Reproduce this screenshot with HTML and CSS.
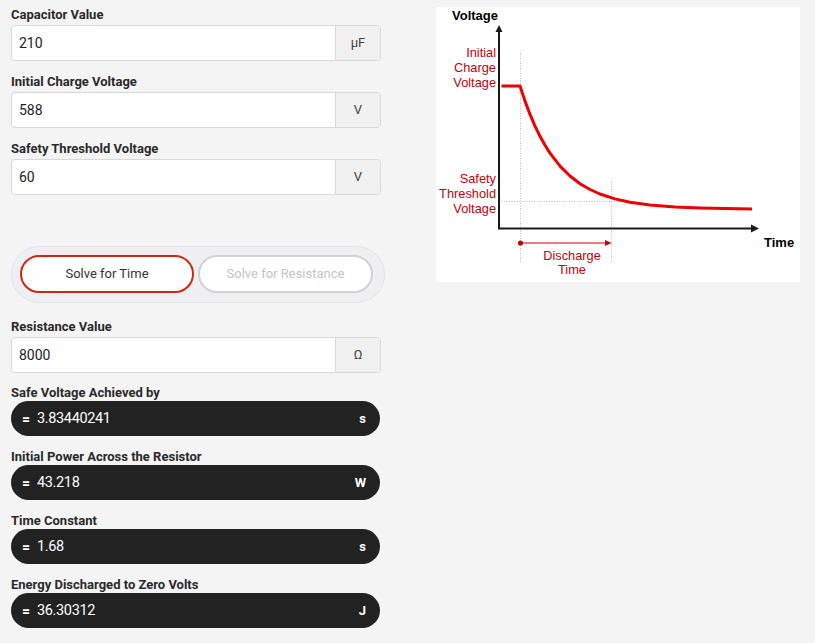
FILE: index.html
```html
<!DOCTYPE html>
<html>
<head>
<meta charset="utf-8">
<link rel="stylesheet" href="styles.css">
</head>
<body>
<div class="page">
  <div class="calc">
    <div class="field">
      <div class="label">Capacitor Value</div>
      <div class="input"><span class="val">210</span><span class="unit">μF</span></div>
    </div>
    <div class="field">
      <div class="label">Initial Charge Voltage</div>
      <div class="input"><span class="val">588</span><span class="unit">V</span></div>
    </div>
    <div class="field">
      <div class="label">Safety Threshold Voltage</div>
      <div class="input"><span class="val">60</span><span class="unit">V</span></div>
    </div>

    <div class="toggle">
      <div class="btn active">Solve for Time</div>
      <div class="btn">Solve for Resistance</div>
    </div>

    <div class="field res">
      <div class="label">Resistance Value</div>
      <div class="input"><span class="val">8000</span><span class="unit">Ω</span></div>
    </div>

    <div class="out-field">
      <div class="label">Safe Voltage Achieved by</div>
      <div class="output"><span class="eq">=</span><span class="oval">3.83440241</span><span class="ounit">s</span></div>
    </div>
    <div class="out-field">
      <div class="label">Initial Power Across the Resistor</div>
      <div class="output"><span class="eq">=</span><span class="oval">43.218</span><span class="ounit">W</span></div>
    </div>
    <div class="out-field">
      <div class="label">Time Constant</div>
      <div class="output"><span class="eq">=</span><span class="oval">1.68</span><span class="ounit">s</span></div>
    </div>
    <div class="out-field">
      <div class="label">Energy Discharged to Zero Volts</div>
      <div class="output"><span class="eq">=</span><span class="oval">36.30312</span><span class="ounit">J</span></div>
    </div>
  </div>

  <div class="chart">
    <svg width="364" height="275" viewBox="436 7 364 275" xmlns="http://www.w3.org/2000/svg">
      <rect x="436" y="7" width="364" height="275" fill="#fff"/>
      <!-- dotted guides -->
      <g stroke="#b9b9b9" stroke-width="1" stroke-dasharray="1 1.5" fill="none">
        <line x1="520.5" y1="53" x2="520.5" y2="263"/>
        <line x1="611.5" y1="181" x2="611.5" y2="263"/>
        <line x1="499" y1="201.5" x2="633" y2="201.5"/>
      </g>
      <!-- axes -->
      <g stroke="#1a1a1a" stroke-width="2" fill="none">
        <line x1="499" y1="31" x2="499" y2="229"/>
        <line x1="498" y1="228.5" x2="752" y2="228.5"/>
      </g>
      <polygon points="499,25 495.5,32 502.5,32" fill="#1a1a1a"/>
      <polygon points="759,228.5 751,224.5 751,232.5" fill="#1a1a1a"/>
      <!-- curve -->
      <path d="M501.5 86 L520 86 L525 101.1 L530 114.4 L535 126.1 L540 136.3 L545 145.3 L550 153.1 L560 166.1 L570 176 L580 183.7 L590 189.5 L600 194 L615 198.9 L630 202.2 L650 205 L675 206.9 L700 207.9 L725 208.6 L752 209" fill="none" stroke="#ee0000" stroke-width="3" stroke-linejoin="round"/>
      <!-- discharge arrow -->
      <circle cx="520.5" cy="243" r="2.6" fill="#c8000a"/>
      <line x1="520" y1="243" x2="606" y2="243" stroke="#c8000a" stroke-width="1.2"/>
      <polygon points="611.5,243 605,240 605,246" fill="#c8000a"/>
      <!-- text -->
      <g class="ax">
        <text x="452" y="19.5">Voltage</text>
        <text x="764" y="246.5">Time</text>
      </g>
      <g class="rl" text-anchor="end">
        <text x="496" y="57">Initial</text>
        <text x="496" y="72">Charge</text>
        <text x="496" y="87">Voltage</text>
        <text x="496" y="183">Safety</text>
        <text x="496" y="198">Threshold</text>
        <text x="496" y="213">Voltage</text>
      </g>
      <g class="rl" text-anchor="middle">
        <text x="572" y="259.5">Discharge</text>
        <text x="572" y="274">Time</text>
      </g>
    </svg>
  </div>
</div>
</body>
</html>
```

FILE: styles.css
```css
* { box-sizing: border-box; }
html, body { margin: 0; padding: 0; }
body {
  background: #f4f4f4;
  font-family: Roboto, "Liberation Sans", Arial, sans-serif;
  color: #222;
  width: 815px;
  height: 643px;
  overflow: hidden;
}
.page {
  display: flex;
  align-items: flex-start;
  padding: 6px 0 0 11px;
}
.calc {
  width: 374px;
  display: flex;
  flex-direction: column;
}
.field { width: 370px; margin-bottom: 12px; }
.label {
  font-size: 13px;
  font-weight: 700;
  line-height: 17px;
  color: #2a2a2a;
  margin-bottom: 2px;
}
.input {
  display: flex;
  height: 36px;
  background: #fff;
  border: 1px solid #d8d8d8;
  border-radius: 4px;
  overflow: hidden;
}
.val {
  flex: 1;
  font-size: 14px;
  line-height: 34px;
  padding-left: 7px;
  color: #222;
}
.unit {
  width: 45px;
  border-left: 1px solid #d8d8d8;
  background: #f0f0f0;
  text-align: center;
  font-size: 13px;
  line-height: 34px;
  color: #444;
}
.toggle {
  margin-top: 39px;
  width: 374px;
  height: 57px;
  border: 1px solid #e2e2e8;
  background: #efeff3;
  border-radius: 29px;
  display: flex;
  gap: 4px;
  padding: 8px 11px 8px 8px;
}
.btn {
  height: 38px;
  border-radius: 19px;
  background: #fff;
  border: 2px solid #d2d2d2;
  color: #c4c4c4;
  font-size: 13px;
  line-height: 34px;
  text-align: center;
  width: 175px;
}
.btn.active {
  width: 174px;
  border-color: #cc2a0c;
  color: #333;
}
.field.res { margin-top: 15px; }
.out-field { width: 369px; margin-bottom: 13px; }
.out-field .label {
  line-height: 16px;
  margin-bottom: 0;
}
.output {
  height: 35px;
  border-radius: 18px;
  background: #222222;
  color: #fff;
  display: flex;
  align-items: center;
  padding: 0 14px 0 11px;
  font-size: 14px;
}
.eq { font-weight: 700; width: 15px; }
.oval { flex: 1; letter-spacing: -0.35px; font-size: 14.5px; }
.ounit { font-weight: 700; font-size: 13px; }
.chart {
  margin-left: 51px;
  margin-top: 1px;
  width: 364px;
  height: 275px;
  background: #fff;
}
.chart svg { display: block; }
.ax {
  font-family: "Liberation Sans", Arial, sans-serif;
  font-weight: 700;
  font-size: 13px;
  fill: #000;
}
.rl {
  font-family: "Liberation Sans", Arial, sans-serif;
  font-size: 12.8px;
  fill: #c8000a;
}
```
